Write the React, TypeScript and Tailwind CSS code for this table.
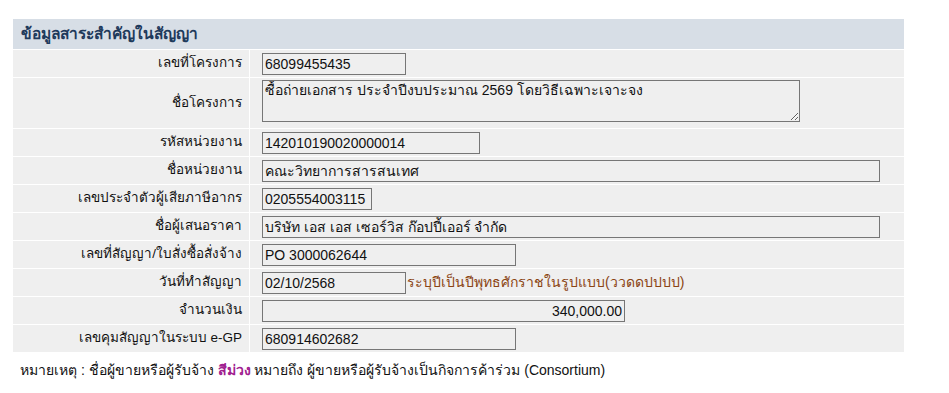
import React from "react";

const font = { fontFamily: "Tahoma, 'Liberation Sans', 'Noto Sans', sans-serif" };

type RowProps = { label: string; children: React.ReactNode; tall?: boolean };

function Row({ label, children, tall }: RowProps) {
  return (
    <div className={`flex gap-px ${tall ? "h-[50px]" : "h-[27px]"}`}>
      <div className="w-[236px] shrink-0 bg-[#efefef] flex items-center justify-end pr-[7px] text-[13.5px] text-[#111]">
        {label}
      </div>
      <div className={`flex-1 bg-[#efefef] flex pl-[12px] ${tall ? "items-start pt-[2px]" : "items-center"}`}>
        {children}
      </div>
    </div>
  );
}

function Box({ value, w, right }: { value: string; w: string; right?: boolean }) {
  return (
    <input
      readOnly
      value={value}
      style={font}
      className={`${w} h-[22px] border border-[#767676] bg-[#efefef] px-[2px] text-[14px] text-[#111] outline-none ${right ? "text-right" : ""}`}
    />
  );
}

export default function App() {
  return (
    <div className="w-[949px] h-[393px] bg-white text-[#111]" style={font}>
      <div className="pt-[19px] pl-[13px]">
        <div className="w-[891px] flex flex-col gap-px">
          <div className="h-[30px] bg-[#d7dee6] flex items-center pl-[8px] text-[15.5px] font-bold text-[#1f3a5c]">
            ข้อมูลสาระสำคัญในสัญญา
          </div>
          <Row label="เลขที่โครงการ">
            <Box value="68099455435" w="w-[144px]" />
          </Row>
          <Row label="ชื่อโครงการ" tall>
            <textarea
              readOnly
              value="ซื้อถ่ายเอกสาร ประจำปีงบประมาณ 2569 โดยวิธีเฉพาะเจาะจง"
              style={font}
              className="w-[538px] h-[42px] border border-[#767676] bg-[#efefef] px-[2px] py-0 text-[14px] leading-[19px] text-[#111] outline-none"
            />
          </Row>
          <Row label="รหัสหน่วยงาน">
            <Box value="142010190020000014" w="w-[218px]" />
          </Row>
          <Row label="ชื่อหน่วยงาน">
            <Box value="คณะวิทยาการสารสนเทศ" w="w-[618px]" />
          </Row>
          <Row label="เลขประจำตัวผู้เสียภาษีอากร">
            <Box value="0205554003115" w="w-[110px]" />
          </Row>
          <Row label="ชื่อผู้เสนอราคา">
            <Box value="บริษัท เอส เอส เซอร์วิส ก๊อปปี้เออร์ จำกัด" w="w-[618px]" />
          </Row>
          <Row label="เลขที่สัญญา/ใบสั่งซื้อสั่งจ้าง">
            <Box value="PO 3000062644" w="w-[254px]" />
          </Row>
          <Row label="วันที่ทำสัญญา">
            <Box value="02/10/2568" w="w-[144px]" />
            <span className="ml-[1px] text-[14px] text-[#8b4513]">ระบุปีเป็นปีพุทธศักราชในรูปแบบ(ววดดปปปป)</span>
          </Row>
          <Row label="จำนวนเงิน">
            <Box value="340,000.00" w="w-[363px]" right />
          </Row>
          <Row label="เลขคุมสัญญาในระบบ e-GP">
            <Box value="680914602682" w="w-[254px]" />
          </Row>
        </div>
        <div className="mt-[8px] pl-[7px] text-[14px] text-[#111]">
          หมายเหตุ : ชื่อผู้ขายหรือผู้รับจ้าง <span className="font-bold text-[#a0208f]">สีม่วง</span> หมายถึง ผู้ขายหรือผู้รับจ้างเป็นกิจการค้าร่วม (Consortium)
        </div>
      </div>
    </div>
  );
}
